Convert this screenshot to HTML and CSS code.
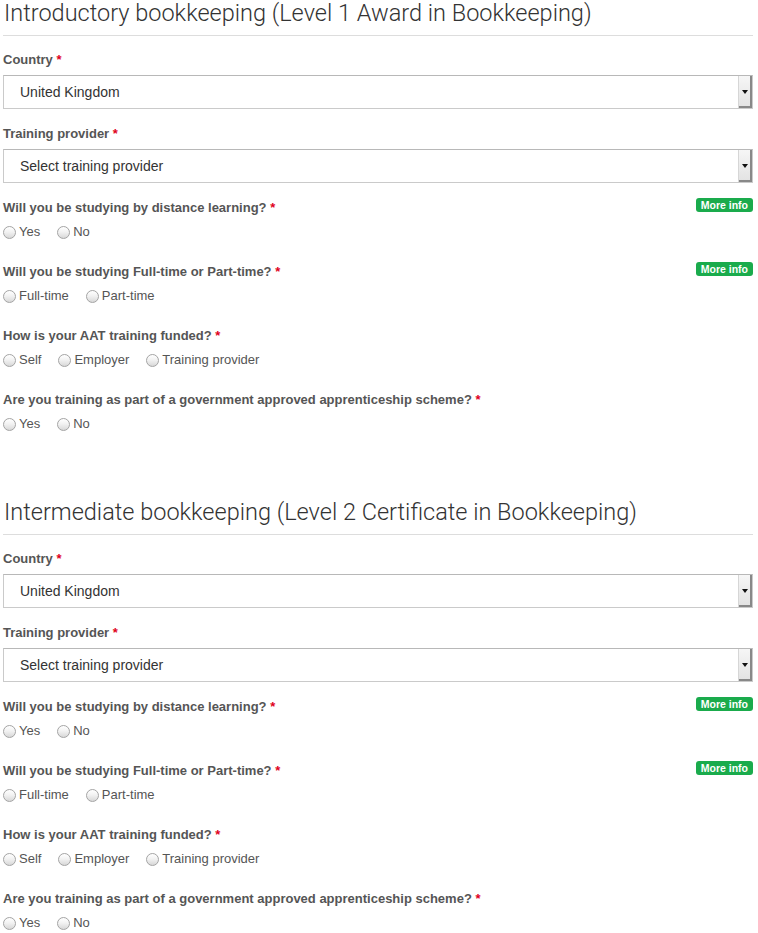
FILE: index.html
```html
<!DOCTYPE html>
<html lang="en">
<head>
<meta charset="utf-8">
<title>Bookkeeping qualifications</title>
<link rel="stylesheet" href="styles.css">
</head>
<body>
<div class="page">

  <section class="section">
    <h2 class="section-title">Introductory bookkeeping (Level 1 Award in Bookkeeping)</h2>

    <div class="group">
      <div class="label-row"><span class="label">Country <span class="req">*</span></span></div>
      <div class="select"><span class="select-text">United Kingdom</span><span class="select-btn"><span class="caret"></span></span></div>
    </div>

    <div class="group">
      <div class="label-row"><span class="label">Training provider <span class="req">*</span></span></div>
      <div class="select"><span class="select-text">Select training provider</span><span class="select-btn"><span class="caret"></span></span></div>
    </div>

    <div class="group group-radio">
      <div class="label-row"><span class="label">Will you be studying by distance learning? <span class="req">*</span></span><span class="badge">More info</span></div>
      <div class="radios">
        <label class="opt"><span class="radio"></span>Yes</label>
        <label class="opt"><span class="radio"></span>No</label>
      </div>
    </div>

    <div class="group group-radio">
      <div class="label-row"><span class="label">Will you be studying Full-time or Part-time? <span class="req">*</span></span><span class="badge">More info</span></div>
      <div class="radios">
        <label class="opt"><span class="radio"></span>Full-time</label>
        <label class="opt"><span class="radio"></span>Part-time</label>
      </div>
    </div>

    <div class="group group-radio">
      <div class="label-row"><span class="label">How is your AAT training funded? <span class="req">*</span></span></div>
      <div class="radios">
        <label class="opt"><span class="radio"></span>Self</label>
        <label class="opt"><span class="radio"></span>Employer</label>
        <label class="opt"><span class="radio"></span>Training provider</label>
      </div>
    </div>

    <div class="group group-radio">
      <div class="label-row"><span class="label">Are you training as part of a government approved apprenticeship scheme? <span class="req">*</span></span></div>
      <div class="radios">
        <label class="opt"><span class="radio"></span>Yes</label>
        <label class="opt"><span class="radio"></span>No</label>
      </div>
    </div>
  </section>

  <section class="section">
    <h2 class="section-title">Intermediate bookkeeping (Level 2 Certificate in Bookkeeping)</h2>

    <div class="group">
      <div class="label-row"><span class="label">Country <span class="req">*</span></span></div>
      <div class="select"><span class="select-text">United Kingdom</span><span class="select-btn"><span class="caret"></span></span></div>
    </div>

    <div class="group">
      <div class="label-row"><span class="label">Training provider <span class="req">*</span></span></div>
      <div class="select"><span class="select-text">Select training provider</span><span class="select-btn"><span class="caret"></span></span></div>
    </div>

    <div class="group group-radio">
      <div class="label-row"><span class="label">Will you be studying by distance learning? <span class="req">*</span></span><span class="badge">More info</span></div>
      <div class="radios">
        <label class="opt"><span class="radio"></span>Yes</label>
        <label class="opt"><span class="radio"></span>No</label>
      </div>
    </div>

    <div class="group group-radio">
      <div class="label-row"><span class="label">Will you be studying Full-time or Part-time? <span class="req">*</span></span><span class="badge">More info</span></div>
      <div class="radios">
        <label class="opt"><span class="radio"></span>Full-time</label>
        <label class="opt"><span class="radio"></span>Part-time</label>
      </div>
    </div>

    <div class="group group-radio">
      <div class="label-row"><span class="label">How is your AAT training funded? <span class="req">*</span></span></div>
      <div class="radios">
        <label class="opt"><span class="radio"></span>Self</label>
        <label class="opt"><span class="radio"></span>Employer</label>
        <label class="opt"><span class="radio"></span>Training provider</label>
      </div>
    </div>

    <div class="group group-radio">
      <div class="label-row"><span class="label">Are you training as part of a government approved apprenticeship scheme? <span class="req">*</span></span></div>
      <div class="radios">
        <label class="opt"><span class="radio"></span>Yes</label>
        <label class="opt"><span class="radio"></span>No</label>
      </div>
    </div>
  </section>

</div>
</body>
</html>
```
FILE: styles.css
```css
html, body {
  margin: 0;
  padding: 0;
  background: #ffffff;
}

body {
  font-family: "Liberation Sans", Arial, sans-serif;
  color: #555555;
}

.page {
  padding: 0 5px 0 3px;
}

.section + .section {
  margin-top: 66px;
}

.section-title {
  margin: 0 0 16px 0;
  padding: 0 0 9px 1px;
  font-family: Roboto, "Liberation Sans", sans-serif;
  font-weight: 300;
  font-size: 23.5px;
  line-height: 26px;
  color: #333333;
  border-bottom: 1px solid #dddddd;
}

.group {
  margin-bottom: 17px;
}

.group-radio {
  margin-bottom: 23px;
}

.label-row {
  display: flex;
  justify-content: space-between;
  align-items: flex-start;
  margin-bottom: 7px;
}

.label {
  font-size: 13px;
  line-height: 16px;
  font-weight: bold;
  color: #555555;
}

.req {
  color: #e0001b;
}

.badge {
  margin-top: -2px;
  height: 14px;
  padding: 0 5px;
  border-radius: 3px;
  background: #1aab4c;
  color: #ffffff;
  font-size: 10.5px;
  font-weight: bold;
  line-height: 14px;
  white-space: nowrap;
}

.select {
  display: flex;
  align-items: stretch;
  height: 34px;
  box-sizing: border-box;
  border: 1px solid #cacaca;
  border-top-color: #b8b8b8;
  background: #ffffff;
}

.select-text {
  flex: 1;
  padding-left: 16px;
  font-size: 14px;
  line-height: 32px;
  color: #333333;
}

.select-btn {
  width: 13px;
  display: flex;
  align-items: center;
  justify-content: center;
  background: linear-gradient(#f6f6f6, #e2e2e2);
  border-left: 1px solid #d6d6d6;
  box-shadow: inset -2px -2px 0 #888888;
}

.caret {
  width: 0;
  height: 0;
  margin-right: 2px;
  border-left: 3px solid transparent;
  border-right: 3px solid transparent;
  border-top: 4px solid #111111;
}

.radios {
  display: flex;
  align-items: center;
  height: 18px;
  gap: 17px;
}

.opt {
  display: flex;
  align-items: center;
  font-size: 13px;
  line-height: 18px;
  color: #555555;
}

.radio {
  width: 13px;
  height: 13px;
  box-sizing: border-box;
  margin-right: 3px;
  border-radius: 50%;
  border: 1px solid #a4a4a4;
  background: linear-gradient(#ffffff 0%, #f2f2f2 45%, #d8d8d8 100%);
}
```
